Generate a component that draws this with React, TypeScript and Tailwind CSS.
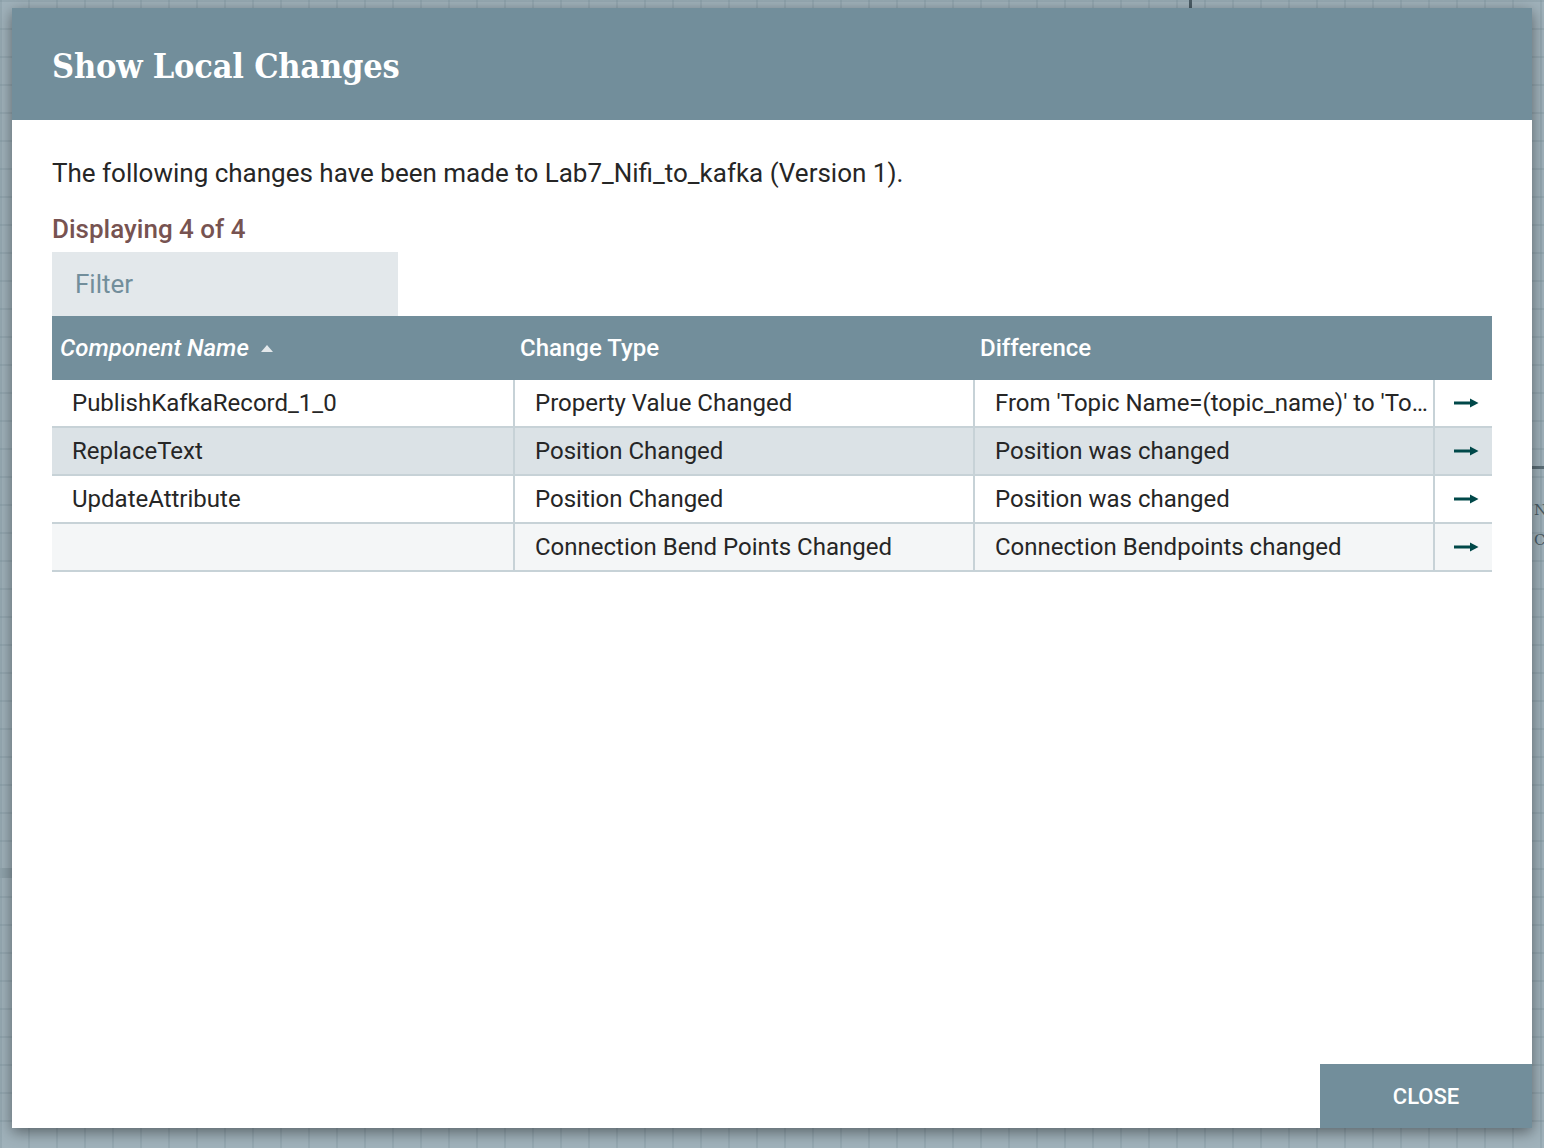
type Row = {
  name: string;
  type: string;
  diff: string;
  bg: string;
};

const rows: Row[] = [
  {
    name: "PublishKafkaRecord_1_0",
    type: "Property Value Changed",
    diff: "From 'Topic Name=(topic_name)' to 'Topic Name=(topic_name_v2)'",
    bg: "bg-white",
  },
  { name: "ReplaceText", type: "Position Changed", diff: "Position was changed", bg: "bg-[#dbe2e6]" },
  { name: "UpdateAttribute", type: "Position Changed", diff: "Position was changed", bg: "bg-white" },
  {
    name: "",
    type: "Connection Bend Points Changed",
    diff: "Connection Bendpoints changed",
    bg: "bg-[#f4f6f7]",
  },
];

const LongArrow = () => (
  <svg width="25" height="12" viewBox="0 0 25 12" className="text-[#004849]">
    <rect x="0" y="4.5" width="17" height="3" fill="currentColor" />
    <path d="M16 1.5 L24.5 6 L16 10.5 Z" fill="currentColor" />
  </svg>
);

export default function App() {
  return (
    <div className="relative h-[1148px] w-[1544px] overflow-hidden bg-[#a0b2bb] bg-[linear-gradient(to_right,rgba(100,122,134,0.18)_2px,transparent_2px),linear-gradient(to_bottom,rgba(100,122,134,0.18)_2px,transparent_2px)] bg-[size:28px_28px] font-['Roboto','Liberation_Sans',sans-serif]">
      {/* canvas bits peeking out behind the dialog */}
      <div className="absolute left-[1189px] top-0 h-[10px] w-[3px] bg-[#4b5d66]" />
      <div className="absolute left-[1528px] top-[466px] h-[3px] w-[16px] bg-[#5a6d76]" />
      <div className="absolute left-[1534px] top-[500px] w-[10px] overflow-hidden font-['DejaVu_Serif',serif] text-[15px] leading-[20px] text-[#4b5d66]">
        N
        <span className="mt-[10px] block">C</span>
      </div>
      <div className="absolute left-0 top-[868px] h-[10px] w-[14px] bg-[#8fa2ab]" />

      {/* dialog */}
      <div className="absolute left-[12px] top-[8px] flex h-[1120px] w-[1520px] flex-col bg-white shadow-[0_4px_14px_rgba(0,0,0,0.45)]">
        <div className="flex h-[112px] shrink-0 items-center bg-[#728e9b] px-[40px] pt-[4px]">
          <h1 className="font-['DejaVu_Serif',serif] text-[34px] font-bold font-stretch-condensed tracking-[-0.2px] text-white">
            Show Local Changes
          </h1>
        </div>

        <div className="flex flex-1 flex-col px-[40px] pt-[36px]">
          <p className="text-[26px] leading-[34px] text-[#262626]">
            The following changes have been made to Lab7_Nifi_to_kafka (Version 1).
          </p>
          <p className="mt-[23px] text-[26px] font-medium leading-[32px] text-[#775351]">
            Displaying 4 of 4
          </p>
          <div className="mt-[7px] flex h-[64px] w-[346px] items-center bg-[#e3e8eb] px-[23px] text-[26px] text-[#728e9b]">
            Filter
          </div>

          {/* table */}
          <div className="w-[1440px]">
            <div className="grid h-[64px] grid-cols-[461px_460px_460px_59px] items-center bg-[#728e9b] text-[24px] font-medium text-white">
              <div className="flex items-center gap-[12px] pl-[8px] italic">
                Component Name
                <span className="h-0 w-0 border-x-[6px] border-b-[7px] border-x-transparent border-b-[#e3e8eb]" />
              </div>
              <div className="pl-[7px]">Change Type</div>
              <div className="pl-[7px]">Difference</div>
              <div />
            </div>
            {rows.map((r, i) => (
              <div
                key={i}
                className={`grid h-[48px] grid-cols-[461px_460px_460px_59px] border-b-2 border-[#c7d2d7] text-[24px] text-[#262626] ${r.bg}`}
              >
                <div className="flex items-center truncate pl-[20px]">{r.name}</div>
                <div className="flex items-center border-l-2 border-[#c7d2d7] pl-[20px]">{r.type}</div>
                <div className="flex min-w-0 items-center border-l-2 border-[#c7d2d7] pl-[20px] pr-[4px]">
                  <span className="truncate">{r.diff}</span>
                </div>
                <div className="flex items-center justify-center border-l-2 border-[#c7d2d7] pl-[6px]">
                  <LongArrow />
                </div>
              </div>
            ))}
          </div>
        </div>

        <div className="flex justify-end">
          <button className="flex h-[64px] w-[212px] items-center justify-center bg-[#728e9b] text-[22px] font-medium text-white">
            CLOSE
          </button>
        </div>
      </div>
    </div>
  );
}
